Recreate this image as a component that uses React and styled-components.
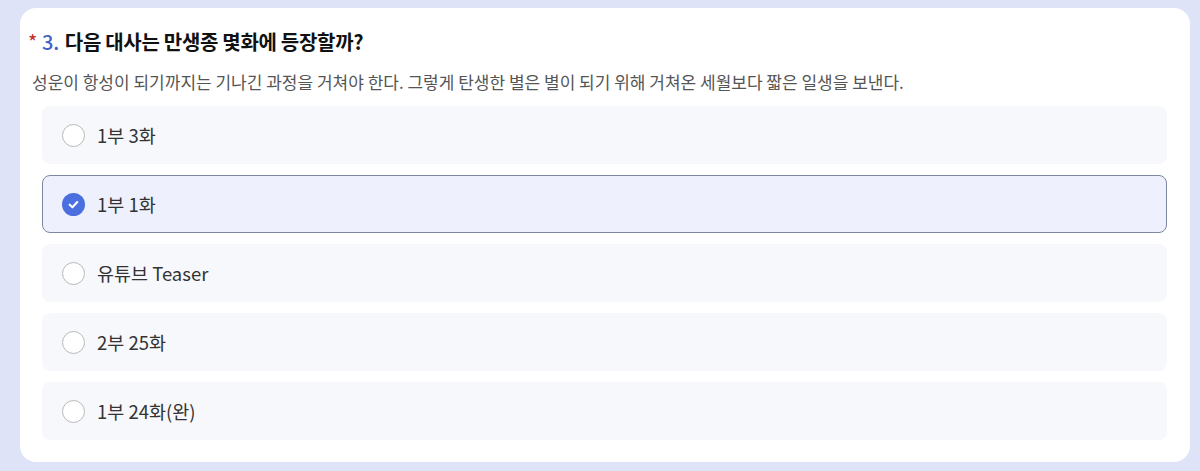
import React, { useState } from 'react';
import styled, { createGlobalStyle } from 'styled-components';

const GlobalStyle = createGlobalStyle`
    html, body {
        margin: 0;
        padding: 0;
        background-color: #dee3f8;
    }
    body {
        font-family: "Noto Sans CJK KR", "Noto Sans", sans-serif;
    }
`;

const Page = styled.div`
    padding: 8px 10px 9px 20px;
`;

const Card = styled.div`
    display: flex;
    flex-direction: column;
    background-color: #FFFFFF;
    border-radius: 16px;
    padding: 20px 23px 22px 8px;
`;

const Title = styled.h2`
    display: flex;
    align-items: baseline;
    margin: 0;
    font-size: 20px;
    font-weight: 700;
    line-height: 28px;
    color: #111;
    letter-spacing: -0.3px;
`;

const Required = styled.span`
    color: #c62828;
    font-size: 20px;
    font-weight: 400;
    margin-right: 5px;
`;

const Number = styled.span`
    color: #3f63c4;
    font-weight: 500;
    margin-right: 6px;
`;

const Description = styled.p`
    margin: 14px 0 12px 4px;
    font-size: 17px;
    line-height: 24px;
    color: #555;
`;

const OptionList = styled.div`
    display: flex;
    flex-direction: column;
    gap: 11px;
    margin-left: 14px;
`;

const Option = styled.label`
    display: flex;
    align-items: center;
    gap: 12px;
    height: 58px;
    box-sizing: border-box;
    padding: 0 0 0 19px;
    border-radius: 8px;
    cursor: pointer;
    background-color: ${props => props.$checked ? '#eef1fd' : '#f7f8fc'};
    border: 1px solid ${props => props.$checked ? '#7b889e' : 'transparent'};
`;

const Radio = styled.span`
    display: flex;
    align-items: center;
    justify-content: center;
    width: 23px;
    height: 23px;
    border-radius: 50%;
    box-sizing: border-box;
    border: ${props => props.$checked ? 'none' : '1px solid #b9b9b9'};
    background-color: ${props => props.$checked ? '#4c6fe0' : '#ffffff'};
`;

const OptionText = styled.span`
    font-size: 18.5px;
    color: #333;
`;

const options = ['1부 3화', '1부 1화', '유튜브 Teaser', '2부 25화', '1부 24화(완)'];

const App = () => {
    const [selected, setSelected] = useState(1);
    return <>
        <GlobalStyle />
        <Page>
            <Card>
                <Title>
                    <Required>*</Required>
                    <Number>3.</Number>
                    다음 대사는 만생종 몇화에 등장할까?
                </Title>
                <Description>
                    성운이 항성이 되기까지는 기나긴 과정을 거쳐야 한다. 그렇게 탄생한 별은 별이 되기 위해 거쳐온 세월보다 짧은 일생을 보낸다.
                </Description>
                <OptionList>
                    {options.map((text, i) => (
                        <Option key={text} $checked={selected === i} onClick={() => setSelected(i)}>
                            <Radio $checked={selected === i}>
                                {selected === i && (
                                    <svg width="13" height="13" viewBox="0 0 12 12">
                                        <path d="M2.5 6.2 L5 8.5 L9.5 3.8" fill="none" stroke="#fff" strokeWidth="2" strokeLinecap="round" strokeLinejoin="round" />
                                    </svg>
                                )}
                            </Radio>
                            <OptionText>{text}</OptionText>
                        </Option>
                    ))}
                </OptionList>
            </Card>
        </Page>
    </>
}

export default App;
